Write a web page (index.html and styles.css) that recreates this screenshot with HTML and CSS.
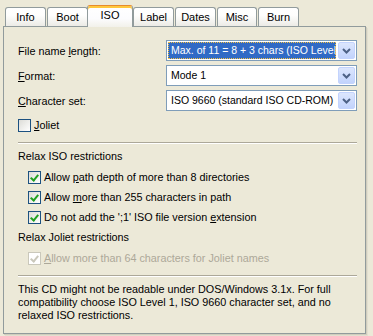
FILE: index.html
```html
<!DOCTYPE html>
<html lang="en">
<head>
  <meta charset="UTF-8" />
  <title>ISO options</title>
  <link rel="stylesheet" href="styles.css">
</head>
<body>

<div class="tabs">
  <div class="tab">Info</div>
  <div class="tab">Boot</div>
  <div class="tab active">ISO</div>
  <div class="tab">Label</div>
  <div class="tab">Dates</div>
  <div class="tab narrow">Misc</div>
  <div class="tab">Burn</div>
</div>

<div class="panel">
  <div class="row">
    <span class="label">File name <u>l</u>ength:</span>
    <div class="combo focused">
      <span class="value">Max. of 11 = 8 + 3 chars (ISO Level 1)</span>
      <span class="drop"><svg width="9" height="6" viewBox="0 0 9 6"><polyline points="1,1 4.5,4.5 8,1" fill="none" stroke="#4d6185" stroke-width="2"/></svg></span>
    </div>
  </div>
  <div class="row">
    <span class="label"><u>F</u>ormat:</span>
    <div class="combo">
      <span class="value">Mode 1</span>
      <span class="drop"><svg width="9" height="6" viewBox="0 0 9 6"><polyline points="1,1 4.5,4.5 8,1" fill="none" stroke="#4d6185" stroke-width="2"/></svg></span>
    </div>
  </div>
  <div class="row">
    <span class="label"><u>C</u>haracter set:</span>
    <div class="combo">
      <span class="value">ISO 9660 (standard ISO CD-ROM)</span>
      <span class="drop"><svg width="9" height="6" viewBox="0 0 9 6"><polyline points="1,1 4.5,4.5 8,1" fill="none" stroke="#4d6185" stroke-width="2"/></svg></span>
    </div>
  </div>

  <label class="check joliet"><span class="box"></span><span><u>J</u>oliet</span></label>

  <hr class="sep">

  <div class="group-title">Relax ISO restrictions</div>
  <label class="check sub"><span class="box checked"></span><span>Allow <u>p</u>ath depth of more than 8 directories</span></label>
  <label class="check sub"><span class="box checked"></span><span>Allow <u>m</u>ore than 255 characters in path</span></label>
  <label class="check sub"><span class="box checked"></span><span>Do not add the ';1' ISO file version <u>e</u>xtension</span></label>

  <div class="group-title">Relax Joliet restrictions</div>
  <label class="check sub disabled"><span class="box checked"></span><span><u>A</u>llow more than 64 characters for Joliet names</span></label>

  <hr class="sep">

  <p class="note">This CD might not be readable under DOS/Windows 3.1x. For full<br>compatibility choose ISO Level 1, ISO 9660 character set, and no<br>relaxed ISO restrictions.</p>
</div>

</body>
</html>
```

FILE: styles.css
```css
body {
  margin: 0;
  padding: 0 7px 0 3px;
  background: #ece9d8;
  font-family: "Liberation Sans", Arial, sans-serif;
  font-size: 10.8px;
  color: #000;
  height: 336px;
  box-sizing: border-box;
  overflow: hidden;
}

/* tab strip */
.tabs {
  display: flex;
  align-items: flex-end;
  height: 27px;
  padding-left: 2px;
  position: relative;
  z-index: 1;
}

.tab {
  width: 41px;
  height: 19px;
  margin: 0 1px 1px 0;
  box-sizing: border-box;
  border: 1px solid #919b9c;
  border-bottom: none;
  border-radius: 3px 3px 0 0;
  background: linear-gradient(#fff, #fefefd 40%, #ecebe6);
  text-align: center;
  line-height: 19px;
  font-size: 11px;
}

.tab.narrow {
  width: 40px;
}

.tab.active {
  width: 46px;
  height: 22px;
  margin: 0 0 0 -2px;
  border-top: 1px solid #e68b2c;
  box-shadow: inset 0 2px 0 #ffc83c;
  background: linear-gradient(#fff, #fcfcfe 60%, #f2f1ea);
  line-height: 19px;
}

/* tab page */
.panel {
  margin-top: -1px;
  height: 308px;
  box-sizing: border-box;
  border: 1px solid #919b9c;
  background: #ece9d8;
  box-shadow: 1px 1px 0 #d0cdbd, 2px 2px 0 #e2dfd0;
  padding: 13px 8px 0 14px;
}

.row {
  display: flex;
  align-items: center;
  height: 21px;
  margin-bottom: 4px;
}

.label {
  flex: none;
  width: 148px;
}

.combo {
  flex: 1;
  min-width: 0;
  height: 21px;
  box-sizing: border-box;
  border: 1px solid #7f9db9;
  background: #fff;
  display: flex;
  align-items: center;
  padding: 1px;
}

.combo .value {
  flex: 1;
  min-width: 0;
  height: 17px;
  line-height: 17px;
  padding-left: 3px;
  white-space: nowrap;
  overflow: hidden;
  font-size: 10.5px;
}

.combo.focused .value {
  background: #316ac5;
  color: #fff;
  outline: 1px dotted #f5c242;
  outline-offset: -1px;
  margin-right: 2px;
}

.drop {
  flex: none;
  width: 17px;
  height: 17px;
  box-sizing: border-box;
  border: 1px solid #c3d3fd;
  border-radius: 2px;
  background: linear-gradient(#dce6fd, #c2d3fc);
  display: flex;
  align-items: center;
  justify-content: center;
}

/* checkboxes */
.check {
  display: flex;
  align-items: center;
  height: 20px;
  white-space: nowrap;
}

.check .box {
  flex: none;
  width: 13px;
  height: 13px;
  box-sizing: border-box;
  border: 1px solid #1c5180;
  background: linear-gradient(135deg, #dcdcd7, #fff);
  margin-right: 3px;
  position: relative;
}

.check .box.checked::after {
  content: "";
  position: absolute;
  left: 3px;
  top: 1px;
  width: 3px;
  height: 6px;
  border: solid #21a121;
  border-width: 0 2px 2px 0;
  transform: rotate(40deg);
}

.joliet {
  margin-top: 2px;
}

.sub {
  padding-left: 10px;
}

.disabled {
  color: #aca899;
}

.disabled .box {
  border-color: #cac8bb;
  background: #fff;
}

.disabled .box.checked::after {
  border-color: #cac8bb;
}

.sep {
  margin: 7px 0 6px 0;
  border: none;
  border-top: 1px solid #aca899;
  border-bottom: 1px solid #fff;
  height: 0;
}

.group-title {
  line-height: 13px;
  margin-bottom: 4px;
}

.check.sub + .group-title {
  margin-top: 4px;
}

.note {
  margin: 0;
  line-height: 13px;
  white-space: nowrap;
}
```
